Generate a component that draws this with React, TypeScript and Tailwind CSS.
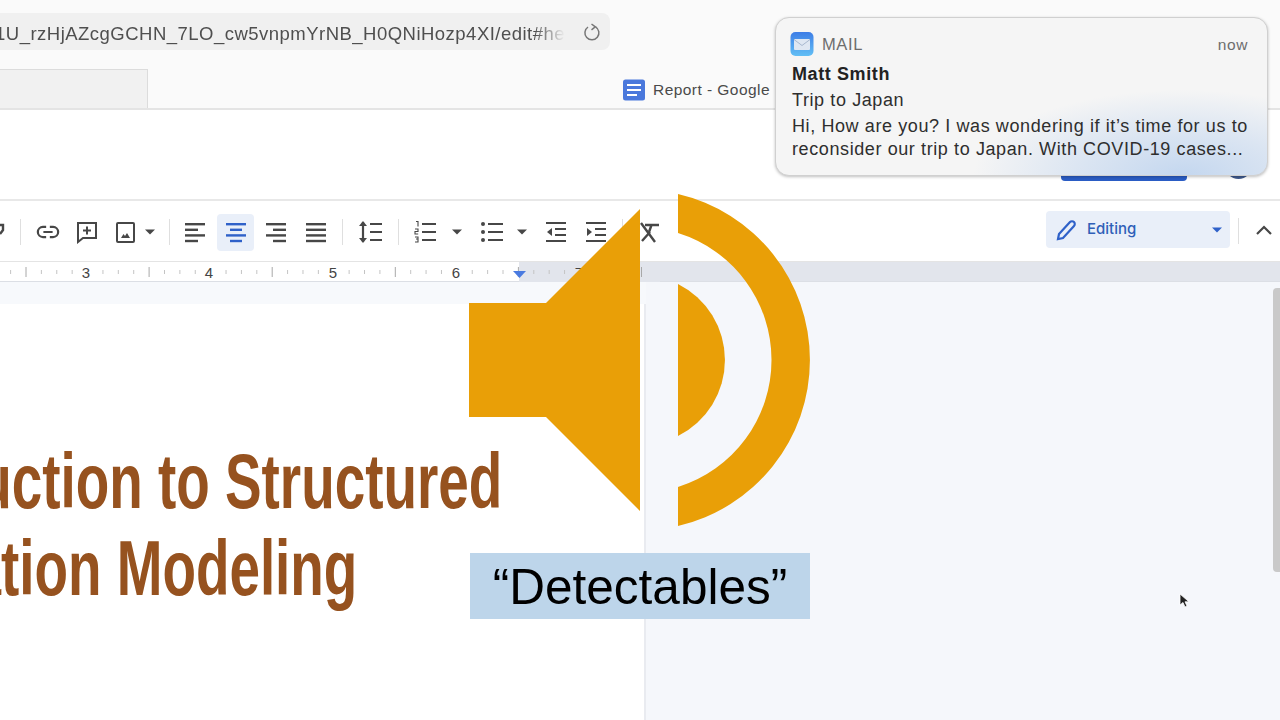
import React from "react";

const G = "#474747";

const Caret = ({ className = "", color = G }: { className?: string; color?: string }) => (
  <svg width="10" height="6" viewBox="0 0 10 6" className={className}>
    <path d="M0 0.500h10L5 5.500z" fill={color} />
  </svg>
);

const Sep = ({ className = "" }: { className?: string }) => (
  <div className={`w-px h-[26px] bg-[#dfdfdf] shrink-0 ${className}`} />
);

const Lines = ({ rows, color = G }: { rows: [number, number][]; color?: string }) => (
  <svg width="24" height="24" viewBox="0 0 24 24">
    {rows.map(([x, w], i) => (
      <rect key={i} x={x} y={3 + i * 5.6} width={w} height="2.400" fill={color} />
    ))}
  </svg>
);

const Link = () => (
  <svg width="26" height="24" viewBox="0 0 26 24" fill="none" stroke={G} strokeWidth="2.400">
    <path d="M11 6.500H7.500a5.500 5.500 0 0 0 0 11H11M15 6.500h3.500a5.500 5.500 0 0 1 0 11H15M8 12h10" />
  </svg>
);

const Comment = () => (
  <svg width="24" height="24" viewBox="0 0 24 24" fill="none" stroke={G} strokeWidth="2">
    <path d="M3 3h18v15H8l-5 4z" />
    <path d="M12 6.500v8M8 10.500h8" />
  </svg>
);

const ImageIcon = () => (
  <svg width="24" height="24" viewBox="0 0 24 24" fill="none" stroke={G} strokeWidth="2">
    <rect x="4" y="3" width="17" height="19" rx="1" />
    <path d="M8 18l2.500-4 1.500 2 2-3 3 5z" fill={G} stroke="none" />
  </svg>
);

const Spacing = () => (
  <svg width="26" height="26" viewBox="0 0 26 26" fill="none" stroke={G} strokeWidth="2.200">
    <path d="M6 3v20" />
    <path d="M2 7l4-5 4 5zM2 19l4 5 4-5z" fill={G} stroke="none" />
    <path d="M13 5h12M13 13h12M13 21h12" />
  </svg>
);

const NumList = () => (
  <svg width="24" height="24" viewBox="0 0 24 24" fill="none" stroke={G} strokeWidth="2.200">
    <path d="M8 4h14M8 12h14M8 20h14" />
    <path d="M2 1.500h2v5M1 9h3v2.500H1V14h3.200M1 17h3v2H2h2v3H1" strokeWidth="1.100" />
  </svg>
);

const BulList = () => (
  <svg width="24" height="24" viewBox="0 0 24 24" fill="none" stroke={G} strokeWidth="2.200">
    <path d="M8 4h15M8 12h15M8 20h15" />
    <circle cx="3" cy="4" r="2" fill={G} stroke="none" />
    <circle cx="3" cy="12" r="2" fill={G} stroke="none" />
    <circle cx="3" cy="20" r="2" fill={G} stroke="none" />
  </svg>
);

const Indent = ({ out = false }: { out?: boolean }) => (
  <svg width="24" height="24" viewBox="0 0 24 24" fill="none" stroke={G} strokeWidth="2.200">
    <path d="M2 3h20M11 9h11M11 15h11M2 21h20" />
    <path d={out ? "M8 8v8L3 12z" : "M3 8v8l5-4z"} fill={G} stroke="none" />
  </svg>
);

const ClearFmt = () => (
  <svg width="24" height="24" viewBox="0 0 24 24" fill="none" stroke={G} strokeWidth="2.400">
    <path d="M8 5h14M14.500 5L12 12" />
    <path d="M4 3l14 19M5 21l8-9" />
  </svg>
);

const DocsIcon = () => (
  <svg width="24" height="24" viewBox="0 0 24 24">
    <rect x="1" y="1.500" width="22" height="21" rx="2.500" fill="#4a78dc" />
    <path d="M5 7h14M5 12h14M5 17h10" stroke="#fff" strokeWidth="2.200" />
  </svg>
);

const Ruler = () => {
  const ticks: React.ReactNode[] = [];
  for (let i = -2; i < 41; i++) {
    const x = 26 + (i * 123.100) / 8;
    const k = ((i % 8) + 8) % 8;
    if (k === 4) continue;
    ticks.push(
      <line
        key={i}
        x1={x}
        x2={x}
        y1={k === 0 ? 5 : 8}
        y2={k === 0 ? 15 : 12}
        stroke={k === 0 ? "#a8a8a8" : "#c4c4c4"}
        strokeWidth="1"
      />
    );
  }
  const nums = [
    ["3", 86],
    ["4", 209],
    ["5", 333],
    ["6", 456],
    ["7", 579],
  ] as const;
  return (
    <svg width="660" height="20" viewBox="0 0 660 20" className="shrink-0">
      <rect x="519" y="0" width="141" height="20" fill="#e2e5ec" />
      {ticks}
      {nums.map(([n, x]) => (
        <text key={n} x={x} y="16" textAnchor="middle" fontSize="15" fill="#444" fontFamily="Liberation Sans, sans-serif">
          {n}
        </text>
      ))}
      <path d="M513 9h13l-6.500 7z" fill="#4a7be0" />
    </svg>
  );
};

export default function App() {
  return (
    <div className="relative w-[1280px] h-[720px] overflow-hidden bg-white font-['Liberation_Sans',sans-serif]">
      <div className="flex flex-col h-full">
        {/* Browser chrome */}
        <div className="h-[110px] shrink-0 bg-[#fafafa] border-b-2 border-[#e4e4e4] flex flex-col">
          <div className="h-[38px] w-[610px] mt-[13px] bg-[#f0f0f0] rounded-r-lg flex items-center overflow-hidden">
            <div className="w-[565px] shrink-0 pt-[4px] overflow-hidden flex justify-end whitespace-nowrap text-[18.500px] tracking-[0.480px] text-[#4f4f4f] [mask-image:linear-gradient(to_right,black_535px,transparent_565px)]">
              d/1U_rzHjAZcgGCHN_7LO_cw5vnpmYrNB_H0QNiHozp4XI/edit#he
            </div>
            <svg width="18" height="20" viewBox="0 0 18 20" fill="none" stroke="#777" strokeWidth="1.500" className="ml-[18px] mt-[2px]">
              <path d="M12.500 3.800A7 7 0 1 1 5 4" />
              <path d="M8.500 1l3.800 2.800-3.800 3" />
            </svg>
          </div>
          <div className="flex items-end flex-1 mt-[19px]">
            <div className="w-[148px] h-[39px] bg-[#f1f1f1] border-t border-r border-[#dcdcdc]" />
            <div className="ml-[474px] h-[39px] flex items-center gap-[7px] pt-[3px]">
              <DocsIcon />
              <span className="text-[15.500px] tracking-[0.450px] text-[#4a4a4a] whitespace-nowrap">Report - Google Docs</span>
            </div>
          </div>
        </div>

        {/* White band */}
        <div className="h-[91px] shrink-0 bg-white border-b-2 border-[#e8e8e8]" />

        {/* Toolbar */}
        <div className="h-[60px] shrink-0 bg-white flex items-center overflow-hidden pt-[2px]">
          <svg width="6" height="24" viewBox="0 0 6 24" className="shrink-0">
            <path d="M-6 5h9v5l-3 4" fill="none" stroke={G} strokeWidth="2.400" />
          </svg>
          <Sep className="ml-[14px]" />
          <div className="ml-[15px] w-6 flex justify-center"><Link /></div>
          <div className="ml-[15px] w-6"><Comment /></div>
          <div className="ml-[14px] w-6"><ImageIcon /></div>
          <Caret className="ml-2 shrink-0" />
          <Sep className="ml-[14px]" />
          <div className="ml-[14px] w-6">
            <Lines rows={[[1, 20], [1, 13], [1, 20], [1, 13]]} />
          </div>
          <div className="ml-[9px] w-[37px] h-[37px] rounded bg-[#e9eff9] flex items-center justify-center">
            <Lines rows={[[2, 20], [6, 12], [2, 20], [6, 12]]} color="#2f61c9" />
          </div>
          <div className="ml-[10px] w-6">
            <Lines rows={[[2, 20], [9, 13], [2, 20], [9, 13]]} />
          </div>
          <div className="ml-4 w-6">
            <Lines rows={[[2, 20], [2, 20], [2, 20], [2, 20]]} />
          </div>
          <Sep className="ml-[14px]" />
          <div className="ml-[14px] w-6"><Spacing /></div>
          <Sep className="ml-[17px]" />
          <div className="ml-[15px] w-6"><NumList /></div>
          <Caret className="ml-[14px] shrink-0" />
          <div className="ml-[18px] w-6"><BulList /></div>
          <Caret className="ml-[13px] shrink-0" />
          <div className="ml-[17px] w-6"><Indent out /></div>
          <div className="ml-4 w-6"><Indent /></div>
          <Sep className="ml-[14px]" />
          <div className="ml-[14px] w-6"><ClearFmt /></div>

          <div className="ml-[385px] mb-[5px] w-[184px] h-[37px] shrink-0 rounded bg-[#e9eff9] flex items-center pl-[9px] pr-[8px]">
            <svg width="22" height="22" viewBox="0 0 22 22" fill="none" stroke="#2f61c9" strokeWidth="2.200">
              <path d="M3 20l1-5L15 3c1-1 3-1 4 0s1 3 0 4L8 19z" />
            </svg>
            <span className="ml-[10px] font-['Inter',sans-serif] text-[15px] font-medium text-[#2f5fb8]">Editing</span>
            <Caret className="ml-auto" color="#2f61c9" />
          </div>
          <Sep className="ml-2 mb-[3px]" />
          <svg width="16" height="10" viewBox="0 0 16 10" fill="none" stroke={G} strokeWidth="2.200" className="ml-[17px] mb-[5px] shrink-0">
            <path d="M1 9l7-7 7 7" />
          </svg>
        </div>

        {/* Ruler */}
        <div className="h-[21px] shrink-0 flex bg-[#e2e5ec] border-b border-[#dcdfe5] border-t border-t-[#e4e4e4]">
          <div className="bg-white h-full flex"><Ruler /></div>
        </div>

        {/* Document */}
        <div className="flex-1 flex bg-[#f5f7fb] min-h-0">
          <div className="w-[646px] shrink-0 flex flex-col">
            <div className="h-[22px] shrink-0 bg-[#f7f9fc]" />
            <div className="flex-1 bg-white border-r-2 border-[#e9ebf0] pt-[134px] overflow-hidden">
              <div className="w-[502px] flex justify-end">
                <div className="origin-right scale-x-[0.703] whitespace-nowrap text-[78px] leading-[87px] font-bold text-[#96521f]">
                  Introduction to Structured
                </div>
              </div>
              <div className="w-[357px] flex justify-end">
                <div className="origin-right scale-x-[0.703] whitespace-nowrap text-[78px] leading-[87px] font-bold text-[#96521f]">
                  Implementation Modeling
                </div>
              </div>
            </div>
          </div>
          <div className="flex-1 flex justify-end pt-[6px]">
            <div className="w-[7px] h-[284px] rounded-l bg-[#c9c9c9]" />
          </div>
        </div>
      </div>

      {/* Blue button and avatar under the notification */}
      <div className="absolute left-[1061px] top-[160px] w-[126px] h-[21px] rounded bg-[#2a5cc4]" />
      <div className="absolute left-[1225px] top-[152px] w-[27px] h-[27px] rounded-full bg-[#3f5a8e]" />

      {/* Notification */}
      <div className="absolute left-[775px] top-[17px] w-[493px] h-[159px] rounded-[14px] border border-[#d0d0d0] shadow-[0_1px_3px_rgba(0,0,0,0.25)] bg-[#f5f5f5] bg-[radial-gradient(ellipse_210px_85px_at_83%_100%,#c4d7ef_0%,#dbe5f2_50%,transparent_100%)] pl-[16px] pr-[19px] pt-[14px] text-[18px] leading-[23px] text-[#2e2e2e] tracking-[0.600px]">
        <div className="flex items-center h-[24px]">
          <svg width="24" height="24" viewBox="0 0 24 24" className="-ml-[2px]">
            <defs>
              <linearGradient id="mailg" x1="0" y1="0" x2="0" y2="1">
                <stop offset="0" stopColor="#3d7de6" />
                <stop offset="1" stopColor="#62bff5" />
              </linearGradient>
            </defs>
            <rect x="0.500" y="0" width="23" height="24" rx="5" fill="url(#mailg)" />
            <rect x="4" y="7" width="16" height="11" rx="1" fill="#dfe7f2" />
            <path d="M4 7.500l8 6 8-6" fill="none" stroke="#a8b8cf" strokeWidth="1" />
          </svg>
          <span className="ml-[8px] text-[16.500px] text-[#6d6d6d]">MAIL</span>
          <span className="ml-auto text-[15.500px] text-[#6d6d6d]">now</span>
        </div>
        <div className="mt-[7px] font-bold text-[#222]">Matt Smith</div>
        <div className="mt-[3px]">Trip to Japan</div>
        <div className="mt-[3px] whitespace-nowrap">Hi, How are you? I was wondering if it’s time for us to</div>
        <div className="whitespace-nowrap">reconsider our trip to Japan. With COVID-19 cases...</div>
      </div>

      {/* Speaker overlay */}
      <svg width="342" height="336" viewBox="469 192 342 336" className="absolute left-[469px] top-[192px]">
        <path d="M469 303h77l94-94v302l-94-94h-77z" fill="#e99f07" />
        <path d="M678 284A85 85 0 0 1 678 436z" fill="#e99f07" />
        <path d="M678 194A170.400 170.400 0 0 1 678 526V487A133 133 0 0 0 678 233z" fill="#e99f07" />
      </svg>

      {/* Caption */}
      <div className="absolute left-[470px] top-[553px] w-[340px] h-[66px] bg-[#bdd5ea] flex items-center justify-center pt-[3px] text-[49.500px] text-black">
        “Detectables”
      </div>

      {/* Cursor */}
      <svg width="12" height="16" viewBox="0 0 12 16" className="absolute left-[1179px] top-[593px]">
        <path d="M1 1v11l3-2.500 2 4.500 2-1-2-4.200h4z" fill="#222" stroke="#fff" strokeWidth="0.800" />
      </svg>
    </div>
  );
}
